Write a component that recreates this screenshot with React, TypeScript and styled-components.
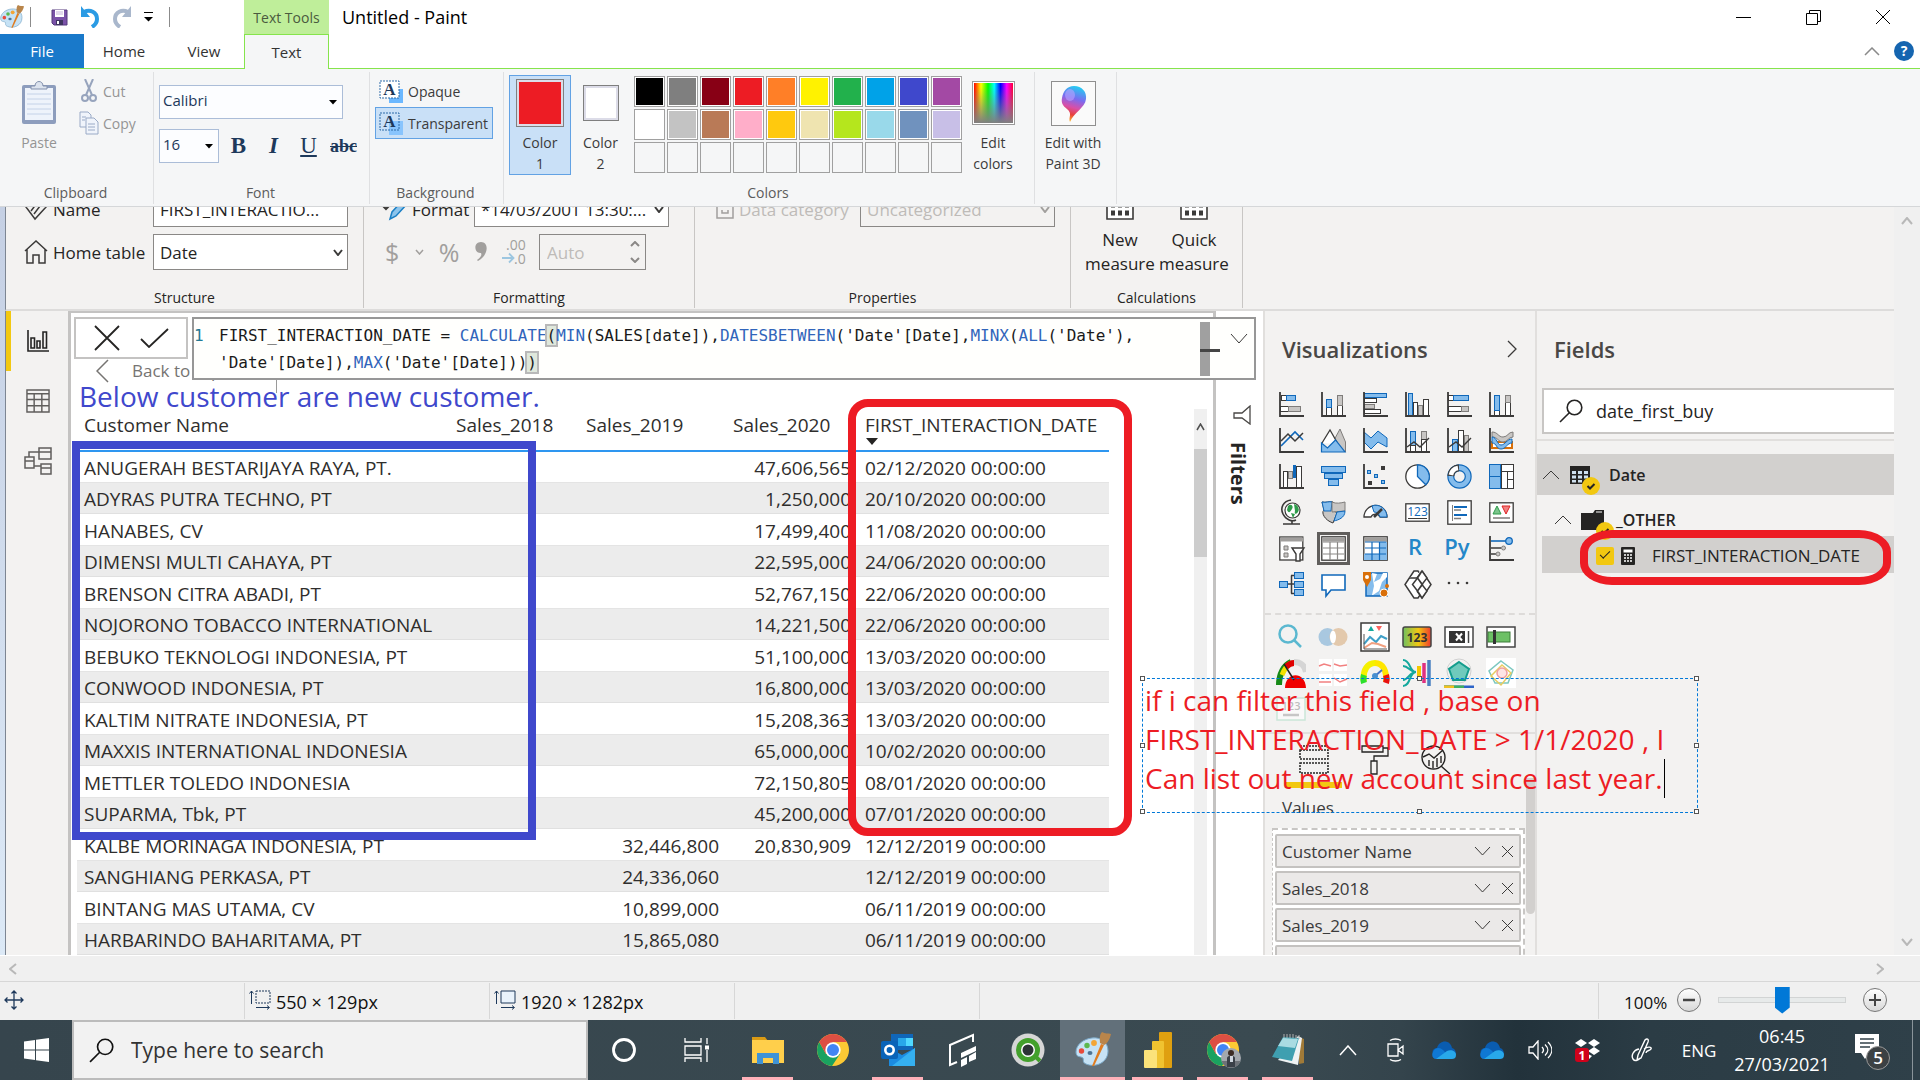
import React from "react";
import styled, { createGlobalStyle, css } from "styled-components";

const sans = `"Open Sans", "Noto Sans", sans-serif`;
const mono = `"DejaVu Sans Mono", "Liberation Mono", monospace`;

const DARK = "#3b3a39";
const BLUE = "#84bcec";
const BLUE_LINE = "#1068ba";
const GREY = "#c8c6c4";
const GREY_LINE = "#7f7d7b";
const RED = "#ed1c24";
const INDIGO = "#3f48cc";

const Global = createGlobalStyle`
  *, *::before, *::after { box-sizing: border-box; }
  html, body { margin: 0; padding: 0; }
  body { font-family: ${sans}; color: #3b3b3b; background: #fff; overflow: hidden; }
  button, input, select, textarea { font: inherit; color: inherit; margin: 0; padding: 0; border: 0; background: none; border-radius: 0; outline: none; }
  select, input[type="checkbox"], input[type="range"] { appearance: none; }
  svg { display: block; flex: none; }
`;

const Screen = styled.div`
  display: flex;
  flex-direction: column;
  height: 100vh;
`;

/* ---------- Paint window: title bar and tabs ---------- */

const TitleBar = styled.header`
  display: flex;
  height: 34px;
  flex: none;
  background: #fff;
`;
const QuickAccess = styled.div`
  display: flex;
  align-items: center;
  width: 244px;
  gap: 12px;
`;
const PlainButton = styled.button`
  display: flex;
  align-items: center;
  justify-content: center;
  flex: none;
`;
const QuickLine = styled.span<{ $first?: boolean }>`
  width: 1px;
  height: 20px;
  background: #8b8b8b;
  margin: ${(p) => (p.$first ? "0 8px 0 -6px" : "0 0 0 4px")};
`;
const ContextTab = styled.div`
  width: 85px;
  display: flex;
  align-items: center;
  justify-content: center;
  background: #bfee9a;
  color: #4a5a3e;
  font-size: 14px;
`;
const WindowTitle = styled.h1`
  margin: 0 auto 0 13px;
  font-size: 18px;
  font-weight: 400;
  line-height: 34px;
  color: #000;
`;
const WindowButtons = styled.div`
  display: flex;
  align-items: center;
  padding-right: 2px;
`;
const WindowButton = styled(PlainButton)`
  width: 70px;
  height: 34px;
`;
const Tabs = styled.nav`
  display: flex;
  height: 35px;
  flex: none;
  border-bottom: 1px solid #86e44c;
  font-size: 15px;
`;
const Tab = styled.button<{ $kind?: "file" | "active" }>`
  width: 80px;
  color: #333;
  ${(p) =>
    p.$kind === "file" &&
    css`
      width: 84px;
      background: #1979ca;
      color: #fff;
    `}
  ${(p) =>
    p.$kind === "active" &&
    css`
      width: 85px;
      height: 35px;
      background: #f5f6f7;
      border: 1px solid #86e44c;
      border-bottom: 0;
    `}
`;
const TabsEnd = styled.div`
  display: flex;
  align-items: center;
  gap: 14px;
  margin-left: auto;
  padding-right: 6px;
`;

/* ---------- Paint ribbon ---------- */

const Ribbon = styled.section`
  display: flex;
  height: 138px;
  flex: none;
  padding: 3px 0 2px;
  background: #f5f6f7;
  border-bottom: 1px solid #d5d7d9;
  font-size: 15px;
`;
const Group = styled.div<{ $w: number }>`
  display: flex;
  flex-direction: column;
  width: ${(p) => p.$w}px;
  border-right: 1px solid #dfe0e2;
`;
const GroupBody = styled.div`
  display: flex;
  flex: 1;
`;
const GroupLabel = styled.div`
  height: 22px;
  line-height: 22px;
  padding-right: 2px;
  text-align: center;
  font-size: 14px;
  color: #5c5c5c;
`;
const TallButton = styled.button<{ $w: number; $on?: boolean }>`
  display: flex;
  flex-direction: column;
  align-items: center;
  width: ${(p) => p.$w}px;
  height: 100px;
  margin-top: 3px;
  border: 1px solid ${(p) => (p.$on ? "#62a2e4" : "transparent")};
  background: ${(p) => (p.$on ? "#c9e0f7" : "none")};
  line-height: 21px;
  font-size: 14px;
`;
const PicSlot = styled.span`
  display: flex;
  align-items: center;
  justify-content: center;
  height: 56px;
  padding-bottom: 2px;
`;
const Muted = styled.span`
  color: #949494;
`;
const ClipSide = styled.div`
  display: flex;
  flex-direction: column;
  padding-top: 3px;
`;
const SmallButton = styled.button<{ $on?: boolean; $muted?: boolean }>`
  display: flex;
  align-items: center;
  gap: 4px;
  height: 32px;
  padding: ${(p) => (p.$muted ? "0" : "0 4px 0 3px")};
  border: 1px solid ${(p) => (p.$on ? "#62a2e4" : "transparent")};
  background: ${(p) => (p.$on ? "#c9e0f7" : "none")};
  color: ${(p) => (p.$muted ? "#949494" : "#3b3b3b")};
  font-size: 14px;
`;
const FontArea = styled.div`
  display: flex;
  flex-direction: column;
  gap: 10px;
  padding: 13px 0 0 5px;
`;
const FontRow = styled.div`
  display: flex;
  align-items: center;
`;
const Combo = styled.label<{ $w: number }>`
  display: flex;
  align-items: center;
  position: relative;
  width: ${(p) => p.$w}px;
  height: 34px;
  border: 1px solid #abbdd8;
  background: #fcfdff;
  color: #1e395b;
  select { width: 100%; height: 100%; padding: 0 3px 4px; }
  svg { position: absolute; right: 5px; pointer-events: none; }
`;
const StyleButton = styled.button<{ $kind: "b" | "i" | "u" | "s" }>`
  width: 35px;
  height: 30px;
  font-family: "Liberation Serif", serif;
  color: #1e395b;
  font-size: ${(p) => (p.$kind === "s" ? 18 : 23)}px;
  font-weight: ${(p) => (p.$kind === "u" ? 400 : 700)};
  font-style: ${(p) => (p.$kind === "i" ? "italic" : "normal")};
  text-decoration: ${(p) => (p.$kind === "u" ? "underline" : p.$kind === "s" ? "line-through" : "none")};
`;
const StyleRow = styled.div`
  display: flex;
  margin-left: 2px;
`;
const BackArea = styled.div`
  display: flex;
  flex-direction: column;
  padding: 3px 0 0 5px;
`;
const ColorsArea = styled.div`
  display: flex;
  padding-left: 5px;
`;
const BigSwatch = styled.span<{ $c: string; $size: number }>`
  width: ${(p) => p.$size}px;
  height: ${(p) => p.$size}px;
  border: 1px solid #7f7f7f;
  padding: 2px;
  background: linear-gradient(${(p) => p.$c}, ${(p) => p.$c}) content-box, #dcdce8;
`;
const Palette = styled.div`
  display: grid;
  grid-template-columns: repeat(10, 31px);
  grid-auto-rows: 31px;
  gap: 2px;
  padding: 4px 0 0 4px;
`;
const Cell = styled.button<{ $c?: string }>`
  border: 1px solid #a0a0a0;
  background: ${(p) => p.$c ?? "#f5f6f7"};
  box-shadow: ${(p) => (p.$c ? "inset 0 0 0 1px #fff" : "none")};
`;

/* ---------- Canvas with the pasted report ---------- */

const CanvasRow = styled.div`
  display: flex;
  flex: 1;
  min-height: 0;
`;
const Canvas = styled.main`
  position: relative;
  flex: 1;
  min-width: 0;
  overflow: hidden;
  display: flex;
  flex-direction: column;
  padding-left: 5px;
  background: linear-gradient(#c5d0e4, #dce9f6);
`;
const VScroll = styled.div`
  display: flex;
  flex-direction: column;
  justify-content: space-between;
  align-items: center;
  width: 26px;
  padding: 10px 0 9px;
  background: #f0f0f0;
`;
const PbiRibbon = styled.section`
  display: flex;
  height: 104px;
  flex: none;
  overflow: hidden;
  background: #f3f2f1;
  border-left: 1px solid #7d8693;
  border-bottom: 2px solid #dddcdb;
  color: #252423;
  font-size: 17px;
`;
const PbiGroup = styled.div<{ $w: number }>`
  display: flex;
  flex-direction: column;
  justify-content: flex-end;
  width: ${(p) => p.$w}px;
  margin-bottom: 1px;
  border-right: 1px solid #c8c6c4;
`;
const PbiLabel = styled.div`
  height: 20px;
  line-height: 20px;
  margin-top: 18px;
  text-align: center;
  font-size: 14px;
`;
const PbiRow = styled.div<{ $pad: number; $dim?: boolean }>`
  display: flex;
  align-items: center;
  flex: none;
  height: 36px;
  margin-top: 7px;
  padding-left: ${(p) => p.$pad}px;
  color: ${(p) => (p.$dim ? "#bebbb8" : "inherit")};
`;
const PbiCaption = styled.label<{ $w: number }>`
  width: ${(p) => p.$w}px;
  flex: none;
  padding-left: 5px;
  white-space: nowrap;
`;
const PbiSelect = styled.div<{ $dim?: boolean }>`
  position: relative;
  display: flex;
  align-items: center;
  width: 195px;
  height: 36px;
  border: 1px solid #8a8886;
  background: ${(p) => (p.$dim ? "#f3f2f1" : "#fff")};
  select, input { width: 100%; height: 100%; padding: 0 6px; }
  svg { position: absolute; right: 4px; pointer-events: none; }
`;
const Tools = styled.div`
  display: flex;
  align-items: center;
  justify-content: space-between;
  width: 142px;
  margin-right: 12px;
  color: #a19f9d;
  font-size: 25px;
  line-height: 30px;
`;
const Spinner = styled.div`
  display: flex;
  align-items: center;
  justify-content: space-between;
  width: 107px;
  height: 36px;
  padding: 0 5px 0 7px;
  border: 1px solid #8a8886;
  color: #bebbb8;
  input { width: 70px; }
`;
const SpinButtons = styled.span`
  display: flex;
  flex-direction: column;
  gap: 10px;
`;
const MeasureRow = styled.div`
  display: flex;
  padding-left: 12px;
  margin-bottom: -6px;
`;
const MeasureButton = styled.button`
  display: flex;
  flex-direction: column;
  align-items: center;
  width: 74px;
  line-height: 24px;
  svg { margin-bottom: 8px; }
`;

const PbiBody = styled.section`
  position: relative;
  display: flex;
  flex: 1;
  min-height: 0;
  border-left: 1px solid #7d8693;
  background: #f3f2f1;
`;
const SideNav = styled.nav`
  display: flex;
  flex-direction: column;
  width: 62px;
  flex: none;
`;
const NavButton = styled(PlainButton)<{ $on?: boolean }>`
  height: 60px;
  padding-right: 4px;
  border-left: 5px solid ${(p) => (p.$on ? "#f2c811" : "transparent")};
`;
const Report = styled.div`
  position: relative;
  flex: 1;
  min-width: 0;
  overflow: hidden;
  background: #fff;
  border: solid #c4c3c2;
  border-width: 2px 3px 0 3px;
`;
const BackButton = styled.button`
  display: flex;
  align-items: center;
  gap: 23px;
  width: 206px;
  height: 45px;
  margin-top: 35px;
  padding-left: 25px;
  border-right: 1px solid #9a9a9a;
  color: #767472;
  font-size: 17px;
`;
const TableArea = styled.div`
  display: flex;
  align-items: flex-start;
  justify-content: space-between;
  margin-top: 16px;
  padding: 0 6px;
`;
const Table = styled.table`
  table-layout: fixed;
  width: 1032px;
  border-collapse: collapse;
  font-size: 19px;
  color: #2f2e2d;
  white-space: nowrap;
`;
const Th = styled.th`
  position: relative;
  height: 42px;
  padding: 2px 7px 0;
  border-bottom: 2px solid #2e96f0;
  font-weight: 400;
  text-align: left;
  vertical-align: top;
  line-height: 28px;
`;
const SortMark = styled.svg`
  position: absolute;
  left: 8px;
  bottom: 5px;
`;
const Tr = styled.tr`
  height: 31px;
  &:nth-child(even) { height: 32px; background: #ececec; box-shadow: inset 0 -1px #e0e0e0, inset 0 1px #e4e4e4; }
`;
const Td = styled.td<{ $num?: boolean }>`
  padding: 2px 7px 0;
  line-height: 24px;
  text-align: ${(p) => (p.$num ? "right" : "left")};
`;
const TableScroll = styled.div`
  display: flex;
  flex-direction: column;
  align-items: center;
  width: 13px;
  height: 560px;
  padding-top: 14px;
  background: #f0f0f0;
`;
const TableThumb = styled.div`
  width: 13px;
  height: 108px;
  margin-top: 18px;
  background: #cdcdcd;
`;
const FilterPane = styled.aside`
  display: flex;
  flex-direction: column;
  align-items: center;
  width: 49px;
  flex: none;
  padding: 94px 0 0 4px;
  background: #fff;
  border-right: 2px solid #e1dfdd;
`;
const FilterTitle = styled.h2`
  margin: 17px 8px 0 0;
  writing-mode: vertical-rl;
  font-size: 20px;
  line-height: 26px;
  font-weight: 700;
  color: #252423;
`;

const VizPane = styled.aside`
  display: flex;
  flex-direction: column;
  width: 272px;
  flex: none;
  border-right: 2px solid #e1dfdd;
`;
const PaneHead = styled.div`
  display: flex;
  align-items: center;
  justify-content: space-between;
  height: 75px;
  flex: none;
  padding: 0 18px 0 17px;
`;
const PaneTitle = styled.h2`
  margin: 0;
  font-size: 22px;
  font-weight: 600;
  color: #494745;
`;
const IconGrid = styled.div`
  display: grid;
  grid-template-columns: repeat(6, 42px);
  grid-auto-rows: 36px;
  padding-left: 5px;
`;
const IconCell = styled(PlainButton)<{ $on?: boolean }>`
  justify-self: center;
  align-self: center;
  width: ${(p) => (p.$on ? 33 : 42)}px;
  height: ${(p) => (p.$on ? 33 : 36)}px;
  border: ${(p) => (p.$on ? "3px solid #605e5c" : "0")};
`;
const WordIcon = styled.span`
  font-size: 22px;
  font-weight: 600;
  line-height: 25px;
  margin: 0 4px 4px 0;
  color: #2487c9;
`;
const DashRule = styled.hr`
  width: 100%;
  margin: 11px 0 4px;
  border: 0;
  border-top: 2px dashed #dddbd9;
`;
const PaneTabs = styled.div`
  display: flex;
  gap: 4px;
  margin-top: 5px;
  padding: 10px 0 0 20px;
  border-top: 2px solid #e1dfdd;
`;
const PaneTab = styled(PlainButton)<{ $on?: boolean }>`
  width: 57px;
  height: 44px;
  align-items: flex-start;
  padding-top: 1px;
  border-bottom: 6px solid ${(p) => (p.$on ? "#f2c811" : "transparent")};
`;
const Wells = styled.div`
  position: relative;
  display: flex;
  flex-direction: column;
  align-items: flex-start;
  flex: 1;
  min-height: 0;
  padding-left: 7px;
`;
const WellTitle = styled.h3`
  flex: none;
  height: 25px;
  margin: 0 0 15px;
  padding: 6px 0 0 10px;
  overflow: hidden;
  font-size: 17px;
  font-weight: 400;
  line-height: 27px;
`;
const WellList = styled.ul`
  display: flex;
  flex-direction: column;
  flex: none;
  gap: 3px;
  width: 253px;
  margin: 0;
  padding: 4px 2px;
  list-style: none;
  border: 2px dashed #c8c6c4;
  border-left-width: 1px;
  background: #fff;
`;
const WellItem = styled.li`
  display: flex;
  align-items: center;
  gap: 10px;
  height: 34px;
  flex: none;
  padding: 0 5px;
  border: 2px solid #c4c2c0;
  border-radius: 2px;
  background: #ebe9e8;
  font-size: 17px;
  span { flex: 1; }
`;
const WellThumb = styled.div`
  position: absolute;
  right: 0;
  top: -10px;
  width: 9px;
  height: 136px;
  border-radius: 0 0 5px 5px;
  background: #d2d0ce;
`;

const FieldsPane = styled.aside`
  display: flex;
  flex-direction: column;
  width: 357px;
  flex: none;
  color: #252423;
`;
const SearchField = styled.label`
  display: flex;
  align-items: center;
  gap: 13px;
  height: 46px;
  margin: 2px 0 5px 5px;
  padding-left: 15px;
  border: 2px solid #c8c6c4;
  border-right: 0;
  background: #fff;
  font-size: 18px;
  input { flex: 1; min-width: 0; }
`;
const FieldRow = styled.div<{ $kind: "table" | "folder" | "measure" }>`
  display: flex;
  align-items: center;
  color: #252423;
  ${(p) =>
    p.$kind === "table" &&
    css`
      height: 41px;
      margin-top: 13px;
      padding-left: 5px;
      background: #d2d0ce;
      font-weight: 600;
      font-size: 16px;
    `}
  ${(p) =>
    p.$kind === "folder" &&
    css`
      height: 41px;
      padding: 8px 0 0 17px;
      font-size: 16px;
      font-weight: 600;
    `}
  ${(p) =>
    p.$kind === "measure" &&
    css`
      height: 37px;
      margin-left: 5px;
      padding: 2px 0 0 54px;
      gap: 7px;
      background: #d2d0ce;
      font-size: 17px;
    `}
`;
const FieldRule = styled.hr`
  width: 100%;
  margin: 0;
  border: 0;
  border-top: 2px solid #e1dfdd;
`;
const FieldName = styled.span<{ $gap: number }>`
  margin-left: ${(p) => p.$gap}px;
`;
const Tick = styled.input`
  display: grid;
  place-items: center;
  width: 18px;
  height: 18px;
  border-radius: 2px;
  background: #f2c811;
  &::after { content: ""; width: 10px; height: 5px; border: solid #252423; border-width: 0 0 1px 1px; rotate: -45deg; translate: 0 -2px; }
`;

/* ---------- Things lying over the report ---------- */

const FormulaButtons = styled.div`
  position: absolute;
  left: 68px;
  top: 6px;
  display: flex;
  align-items: center;
  justify-content: center;
  gap: 20px;
  width: 114px;
  height: 42px;
  border: 2px solid #c4c3c2;
  background: #fff;
`;
const FormulaBox = styled.div`
  position: absolute;
  left: 186px;
  right: 638px;
  top: 6px;
  display: flex;
  height: 63px;
  border: 2px solid #979797;
  background: #fffffd;
`;
const Formula = styled.code`
  flex: 1;
  display: grid;
  grid-template-columns: 25px 1fr;
  align-content: start;
  padding-top: 3px;
  font-family: ${mono};
  font-size: 16px;
  line-height: 27px;
  color: #1a1a1a;
  white-space: pre;
`;
const LineNo = styled.span`
  color: #237893;
`;
const Fn = styled.span`
  color: #3165bb;
`;
const Paren = styled.span`
  background: #dfe8dc;
  box-shadow: 0 0 0 2px #b9b9b9;
`;
const FormulaScroll = styled.span`
  position: relative;
  width: 10px;
  margin: 3px 18px 2px 0;
  background: #a0a0a0;
  &::after { content: ""; position: absolute; left: 0; top: 27px; width: 20px; height: 3px; background: #454545; }
`;
const FormulaToggle = styled(PlainButton)`
  align-items: flex-start;
  width: 22px;
  margin-right: 4px;
  padding-top: 14px;
`;
const Mark = styled.div<{ $x: number; $y: number; $w: number; $h: number; $c: string; $r: string }>`
  position: absolute;
  left: ${(p) => p.$x}px;
  top: ${(p) => p.$y}px;
  width: ${(p) => p.$w}px;
  height: ${(p) => p.$h}px;
  border: 8px solid ${(p) => p.$c};
  border-radius: ${(p) => p.$r};
  pointer-events: none;
`;
const Note = styled.p`
  position: absolute;
  left: 79px;
  top: 170px;
  margin: 0;
  font-size: 28px;
  line-height: 39px;
  color: ${INDIGO};
  white-space: nowrap;
`;
const TextBox = styled.div`
  position: absolute;
  left: 1142px;
  top: 471px;
  width: 556px;
  height: 135px;
  border: 1px dashed #0078d7;
  textarea {
    display: block;
    width: 100%;
    height: 100%;
    padding: 2px 0 0 2px;
    resize: none;
    overflow: hidden;
    font-size: 28px;
    line-height: 39px;
    color: ${RED};
    white-space: pre;
  }
`;
const Handle = styled.i<{ $x: string; $y: string }>`
  position: absolute;
  left: ${(p) => p.$x};
  top: ${(p) => p.$y};
  width: 5px;
  height: 5px;
  margin: -3px;
  border: 1px solid #555;
  background: #fff;
`;
const Caret = styled.i`
  position: absolute;
  left: 521px;
  top: 80px;
  width: 1px;
  height: 39px;
  background: #000;
`;

/* ---------- Paint scroll bar and status bar ---------- */

const HScroll = styled.div`
  display: flex;
  align-items: center;
  justify-content: space-between;
  height: 26px;
  flex: none;
  padding: 0 36px 0 9px;
  background: #f0f0f0;
  border-top: 1px solid #fff;
`;
const Status = styled.footer`
  display: flex;
  height: 39px;
  flex: none;
  background: #f0f0f0;
  border-top: 1px solid #d7d7d7;
  color: #111;
  font-size: 18px;
`;
const StatusCell = styled.div<{ $grow?: boolean }>`
  display: flex;
  align-items: center;
  gap: 5px;
  width: 245px;
  ${(p) => p.$grow && "flex: 1;"}
  padding: 2px 4px 0 4px;
  margin: 1px 0;
  border-right: 1px solid #d7d7d7;
`;
const StatusIcon = styled.svg`
  margin-bottom: 4px;
`;
const Zoom = styled.div`
  display: flex;
  align-items: center;
  gap: 10px;
  width: 321px;
  padding: 0 0 2px 25px;
  span { padding-top: 5px; font-size: 17px; }
`;
const RoundButton = styled(PlainButton)`
  width: 24px;
  height: 24px;
  border: 1px solid #777;
  border-radius: 50%;
  background: linear-gradient(#fff, #d8d8d8);
`;
const Slider = styled.input`
  width: 128px;
  height: 28px;
  margin: 0 7px;
  background: linear-gradient(#e7eaea, #e7eaea) center / 126px 4px no-repeat, linear-gradient(#d2d4d4, #d2d4d4) center / 100% 6px no-repeat;
  &::-webkit-slider-thumb {
    appearance: none;
    width: 15px;
    height: 27px;
    background: #0078d7;
    clip-path: polygon(0 0, 100% 0, 100% 78%, 50% 100%, 0 78%);
  }
`;

/* ---------- Windows task bar ---------- */

const TaskBar = styled.footer`
  display: flex;
  height: 60px;
  flex: none;
  background: linear-gradient(90deg, #36454d 0%, #3a4a51 66%, #34444c 73%, #22323b 79%, #2b3c45 86%, #2f4049 100%);
  color: #fff;
`;
const TaskButton = styled(PlainButton)<{ $w: number; $on?: boolean; $run?: boolean }>`
  position: relative;
  width: ${(p) => p.$w}px;
  background: ${(p) => (p.$on ? "#62707a" : "none")};
  &::after {
    content: "";
    position: absolute;
    left: ${(p) => (p.$on ? 0 : 7)}px;
    right: ${(p) => (p.$on ? 0 : 7)}px;
    bottom: 0;
    height: 3px;
    background: ${(p) => (p.$run ? "#ffb1b9" : "none")};
  }
`;
const TaskSearch = styled.label`
  display: flex;
  align-items: center;
  gap: 17px;
  width: 516px;
  padding-left: 15px;
  border: 2px solid #bcbcbc;
  background: #f2f2f2;
  color: #333;
  font-size: 21px;
  input { flex: 1; min-width: 0; }
  input::placeholder { color: #333; opacity: 1; }
`;
const Gap = styled.span`
  width: 3px;
`;
const Tray = styled.div`
  display: flex;
  margin-left: auto;
  font-size: 17px;
`;
const Clock = styled.div`
  display: flex;
  flex-direction: column;
  justify-content: center;
  width: 112px;
  text-align: center;
  font-size: 18px;
  line-height: 28px;
`;
const PeekLine = styled.span`
  width: 8px;
  margin-left: 8px;
  border-left: 1px solid #8a949a;
`;

/* ---------- Small drawings ---------- */

type ChevProps = { dir: "up" | "down" | "left" | "right"; w: number; h: number; c?: string; sw?: number };
const Chev = ({ dir, w, h, c = "#3b3a39", sw = 1 }: ChevProps) => {
  const d = {
    up: `M1 ${h - 1}L${w / 2} 1L${w - 1} ${h - 1}`,
    down: `M1 1L${w / 2} ${h - 1}L${w - 1} 1`,
    left: `M${w - 1} 1L1 ${h / 2}L${w - 1} ${h - 1}`,
    right: `M1 1L${w - 1} ${h / 2}L1 ${h - 1}`,
  }[dir];
  return (
    <svg width={w} height={h} fill="none" stroke={c} strokeWidth={sw}>
      <path d={d} />
    </svg>
  );
};
const Cross = ({ s, c = "#3b3a39", sw = 1 }: { s: number; c?: string; sw?: number }) => (
  <svg width={s} height={s} stroke={c} strokeWidth={sw}>
    <path d={`M1 1L${s - 1} ${s - 1}M${s - 1} 1L1 ${s - 1}`} />
  </svg>
);
const Drop = () => (
  <svg width="8" height="5"><path d="M0 0h8L4 4.500z" fill="#000" /></svg>
);
const Magnifier = ({ s, c = "#252423" }: { s: number; c?: string }) => (
  <svg width={s} height={s} viewBox="0 0 24 24" fill="none" stroke={c} strokeWidth="1.600">
    <circle cx="15.500" cy="8.500" r="7.300" />
    <path d="M10.300 13.700L1 23" />
  </svg>
);
const Bar = ({ x, y, w, h, k }: { x: number; y: number; w: number; h: number; k: "b" | "g" | "w" | "d" }) => {
  const fill = { b: BLUE, g: GREY, w: "#fff", d: DARK }[k];
  const line = { b: BLUE_LINE, g: GREY_LINE, w: DARK, d: DARK }[k];
  return <rect x={x + 0.5} y={y + 0.5} width={w - 1} height={h - 1} fill={fill} stroke={line} />;
};
const Axis = () => <path d="M1 0V24H25" fill="none" stroke={DARK} strokeWidth="1.800" />;

const PaletteIcon = ({ s }: { s: number }) => (
  <svg width={s} height={s} viewBox="0 0 36 36">
    <path d="M17 6C8 7 1 13 1 20c0 6 5 4 7 6 1 3-1 4 3 6 9 4 22-1 22-13C33 10 26 5 17 6z" fill="#c6e2f5" stroke="#7ba9c9" />
    <circle cx="6.500" cy="19" r="2.700" fill="#e84a3b" /><circle cx="12" cy="13.500" r="2.700" fill="#5cb84f" />
    <circle cx="19" cy="11" r="2.900" fill="#f3a536" /><ellipse cx="15" cy="21" rx="2.500" ry="2" fill="#4d7496" />
    <path d="M17 34L26 12l3 1-10 21z" fill="#e07c20" /><path d="M25 11c0-3-1-8 2-11 3 2 6 1 9 2-1 5-4 10-7 11z" fill="#b9854b" />
  </svg>
);
const SaveIcon = () => (
  <svg width="17" height="17" viewBox="0 0 17 17"><path d="M1 1h15v15H3l-2-2z" fill="#7a52a8" stroke="#55397c" /><path d="M4 1h9v7H4z" fill="#fff" /><path d="M5 3h7M5 5h7" stroke="#c5b3da" /><path d="M5 11h7v5H5z" fill="#3e3560" /><path d="M6 12h2v3H6z" fill="#fff" /></svg>
);
const UndoIcon = ({ c, flip }: { c: string; flip?: boolean }) => (
  <svg width="20" height="22" viewBox="0 0 20 22"><g transform={flip ? "translate(20 0) scale(-1 1)" : undefined}><path d="M4 6c6-3 13 0 13 7 0 4-2 6-5 8" fill="none" stroke={c} strokeWidth="4" /><path d="M1 0v11h9z" fill={c} /></g></svg>
);
const PasteIcon = () => (
  <svg width="36" height="44" viewBox="0 0 36 44"><rect x="1" y="4" width="34" height="39" rx="2" fill="#8d9dbd" /><rect x="4" y="7" width="28" height="32" fill="#eef3fb" /><path d="M6 13h24M6 18h24M6 23h24M6 28h24M6 33h24" stroke="#c4d2e8" /><path d="M10 8V5h4c0-6 8-6 8 0h4v3z" fill="#dce3ee" stroke="#8290ac" /></svg>
);
const CutIcon = () => (
  <svg width="20" height="24" viewBox="0 0 20 24" fill="none" stroke="#97a4bd" strokeWidth="2"><path d="M6 0l7 16M14 0L7 16" /><circle cx="6" cy="19" r="3" /><circle cx="14" cy="19" r="3" /></svg>
);
const CopyIcon = () => (
  <svg width="20" height="24" viewBox="0 0 20 24" fill="#f0f4fb" stroke="#9aaac6"><path d="M1 1h8l3 3v12H1z" /><path d="M7 7h8l4 4v12H7z" /><path d="M9 13h7M9 16h7M9 19h7M3 6h4M3 9h3" /></svg>
);
const TextBackIcon = ({ clear }: { clear?: boolean }) => (
  <svg width="25" height="23" viewBox="0 0 25 23">
    <rect x="10" y="9" width="14" height="14" fill="#6cb8ff" opacity={clear ? 0.7 : 1} />
    <rect x="1" y="1" width="19" height="17" fill={clear ? "none" : "#fff"} stroke="#2c6aa8" strokeDasharray="2 1" />
    <text x="10.500" y="15" textAnchor="middle" fontFamily="Liberation Serif, serif" fontWeight="700" fontSize="17" fill="#1e395b">A</text>
  </svg>
);
const RainbowIcon = () => (
  <svg width="43" height="44">
    <defs>
      <linearGradient id="hue"><stop offset="0" stopColor="#f00" /><stop offset=".18" stopColor="#ff0" /><stop offset=".36" stopColor="#0f0" /><stop offset=".52" stopColor="#0ff" /><stop offset=".68" stopColor="#00f" /><stop offset=".84" stopColor="#f0f" /><stop offset="1" stopColor="#f03" /></linearGradient>
      <linearGradient id="fade" x2="0" y2="1"><stop offset=".1" stopColor="#808080" stopOpacity="0" /><stop offset="1" stopColor="#808080" /></linearGradient>
    </defs>
    <rect x=".5" y=".5" width="42" height="43" fill="#fff" stroke="#9a9a9a" /><rect x="2" y="2" width="39" height="40" fill="url(#hue)" /><rect x="2" y="2" width="39" height="40" fill="url(#fade)" />
  </svg>
);
const Paint3DIcon = () => (
  <svg width="45" height="45">
    <defs><linearGradient id="drop3d" x1=".6" y1="0" x2=".4" y2="1"><stop offset="0" stopColor="#22cdf2" /><stop offset=".35" stopColor="#7a6cf0" /><stop offset=".6" stopColor="#d84fa8" /><stop offset=".8" stopColor="#e8413c" /><stop offset="1" stopColor="#fbb829" /></linearGradient></defs>
    <rect x=".5" y=".5" width="44" height="44" fill="#fafafa" stroke="#8f8f8f" />
    <path d="M23 5c8 0 13 6 12 13-1 9-12 13-16 23-2-5 3-8-3-13-4-3-6-6-5-11C12 10 16 5 23 5z" fill="url(#drop3d)" />
    <ellipse cx="19" cy="14" rx="5" ry="6" fill="#b9a4ff" opacity=".6" />
  </svg>
);

/* Visual gallery, each drawing in a 25-unit box */
const visuals: { name: string; art: React.ReactNode }[] = [
  { name: "Stacked bar chart", art: <><Bar x={2} y={3} w={6} h={6} k="w" /><Bar x={7} y={3} w={10} h={6} k="b" /><Bar x={1} y={14} w={9} h={6} k="w" /><Bar x={9} y={14} w={13} h={6} k="g" /><Axis /></> },
  { name: "Stacked column chart", art: <><Bar x={5} y={15} w={6} h={9} k="w" /><Bar x={5} y={7} w={6} h={9} k="b" /><Bar x={16} y={13} w={6} h={11} k="w" /><Bar x={16} y={3} w={6} h={11} k="g" /><Axis /></> },
  { name: "Clustered bar chart", art: <><Bar x={1} y={1} w={23} h={5} k="b" /><Bar x={1} y={6} w={13} h={5} k="w" /><Bar x={1} y={12} w={11} h={5} k="g" /><Bar x={1} y={17} w={17} h={5} k="w" /><Axis /></> },
  { name: "Clustered column chart", art: <><Bar x={3} y={1} w={5} h={23} k="b" /><Bar x={8} y={10} w={5} h={14} k="w" /><Bar x={13} y={13} w={5} h={11} k="g" /><Bar x={18} y={7} w={6} h={17} k="w" /><Axis /></> },
  { name: "100% stacked bar chart", art: <><Bar x={1} y={3} w={6} h={6} k="w" /><Bar x={6} y={3} w={16} h={6} k="b" /><Bar x={1} y={14} w={14} h={6} k="w" /><Bar x={14} y={14} w={8} h={6} k="g" /><Axis /></> },
  { name: "100% stacked column chart", art: <><Bar x={5} y={18} w={6} h={6} k="w" /><Bar x={5} y={3} w={6} h={16} k="b" /><Bar x={16} y={10} w={6} h={14} k="w" /><Bar x={16} y={3} w={6} h={8} k="g" /><Axis /></> },
  { name: "Line chart", art: <><path d="M2 18L16 4l8 8" fill="none" stroke={BLUE_LINE} strokeWidth="1.600" /><path d="M2 13L9 6l7 7 8-8" fill="none" stroke={DARK} strokeWidth="1.500" /><Axis /></> },
  { name: "Area chart", art: <><path d="M12 14L19 1l5.500 13v10" fill={GREY} stroke={GREY_LINE} /><path d="M1 15L9 2l8 14" fill="#fff" stroke={DARK} strokeWidth="1.300" /><path d="M.5 24V15l6 5 8-8L24 24z" fill={BLUE} stroke={BLUE_LINE} strokeWidth="1.200" /></> },
  { name: "Stacked area chart", art: <><path d="M1 4l7 6 7-7 9 7v9l-9-5-7 7-7-7z" fill={BLUE} stroke={BLUE_LINE} /><Axis /></> },
  { name: "Line and stacked column chart", art: <><Bar x={5} y={3} w={6} h={15} k="b" /><Bar x={5} y={17} w={6} h={7} k="w" /><Bar x={16} y={3} w={6} h={9} k="g" /><Bar x={16} y={11} w={6} h={13} k="w" /><path d="M2 19l7-5 6 5 9-9" fill="none" stroke={DARK} strokeWidth="1.400" /><Axis /></> },
  { name: "Line and clustered column chart", art: <><Bar x={5} y={11} w={6} h={13} k="b" /><Bar x={11} y={2} w={6} h={22} k="w" /><Bar x={17} y={7} w={5} h={17} k="g" /><path d="M2 19l7-5 6 5 9-9" fill="none" stroke={DARK} strokeWidth="1.400" /><Axis /></> },
  { name: "Ribbon chart", art: <><path d="M3 14h20v6H3z" fill="#fff" stroke="#d9700a" strokeWidth="2" /><path d="M3 4c6 0 6 5 11 5s5-5 10-5v5c-5 0-5 5-10 5S9 9 3 9z" fill={GREY} stroke={GREY_LINE} /><path d="M3 9c5 0 5 8 9 8s6-6 11-6v4c-5 0-6 6-11 6s-4-6-9-6z" fill={BLUE} stroke={BLUE_LINE} /><Axis /></> },
  { name: "Waterfall chart", art: <><Bar x={4} y={7} w={5} h={17} k="w" /><Bar x={9} y={7} w={5} h={8} k="g" /><rect x="14" y="1" width="3" height="13" fill={BLUE_LINE} /><Bar x={17} y={2} w={6} h={22} k="w" /><Axis /></> },
  { name: "Funnel chart", art: <><Bar x={0} y={2} w={25} h={7} k="b" /><Bar x={3} y={9} w={19} h={6} k="b" /><Bar x={7} y={15} w={11} h={7} k="b" /></> },
  { name: "Scatter chart", art: <><rect x="18" y="2" width="4" height="4" fill={DARK} /><Bar x={4} y={6} w={4} h={4} k="b" /><Bar x={11} y={10} w={4} h={4} k="b" /><Bar x={18} y={16} w={4} h={4} k="b" /><rect x="5" y="17" width="4" height="4" fill={DARK} /><Axis /></> },
  { name: "Pie chart", art: <><circle cx="12.500" cy="12.500" r="11.700" fill="#fff" stroke={DARK} strokeWidth="1.300" /><path d="M12.500 .8v11.700l8.300 8.300A11.700 11.700 0 0 0 12.500 .8z" fill={BLUE} stroke={BLUE_LINE} strokeWidth="1.300" /></> },
  { name: "Donut chart", art: <><circle cx="12.500" cy="12.500" r="8.700" fill="none" stroke={BLUE_LINE} strokeWidth="7" /><circle cx="12.500" cy="12.500" r="8.700" fill="none" stroke={BLUE} strokeWidth="4.600" /><path d="M12 3.800A8.700 8.700 0 0 0 3.800 12" fill="none" stroke={DARK} strokeWidth="7" /><path d="M11 3.900A8.700 8.700 0 0 0 3.900 11" fill="none" stroke="#fff" strokeWidth="4.600" /></> },
  { name: "Treemap", art: <><Bar x={0} y={0} w={12} h={13} k="b" /><Bar x={0} y={12} w={12} h={13} k="b" /><Bar x={12} y={0} w={13} h={8} k="w" /><Bar x={12} y={7} w={7} h={18} k="w" /><Bar x={18} y={7} w={7} h={9} k="w" /><Bar x={18} y={15} w={7} h={10} k="w" /></> },
  { name: "Map", art: <><circle cx="13.500" cy="10.500" r="7.500" fill="#fff" stroke={DARK} strokeWidth="1.200" /><path d="M9 6c3-3 6 0 4 3s-3 5-5 1zM15 4c4 1 6 5 4 8s-4 2-3-1zM12 13l4 1-2 4z" fill="#2e9b4a" /><path d="M12 0C4 1 1 8 4 14s9 8 13 6M13 20v4M4 24h17" fill="none" stroke={DARK} strokeWidth="1.600" /></> },
  { name: "Filled map", art: <><path d="M1 2c4 1 8-1 11 0v8l4 3-4 10C3 20 0 12 3 10z" fill={GREY} stroke={DARK} /><path d="M1 2c4 1 7-1 10 0l-1 9H3z" fill={BLUE} stroke={BLUE_LINE} /><path d="M11 2c4 2 9 1 13 0v9l-13 1z" fill={GREY} stroke={GREY_LINE} /><path d="M24 11c0 7-7 9-11 10l3-9z" fill={BLUE} stroke={BLUE_LINE} /></> },
  { name: "Gauge", art: <><path d="M1 17A11.500 11.500 0 0 1 24 17h-7a5 5 0 0 0-9 0z" fill="#fff" stroke={DARK} strokeWidth="1.300" /><path d="M9 6c7-3 15 3 15 11h-7c-1-3-3-5-6-5z" fill={BLUE} stroke={BLUE_LINE} /><path d="M11 17l8-8" stroke={DARK} strokeWidth="2.500" /></> },
  { name: "Card", art: <><rect x=".8" y="3.800" width="23.400" height="17.400" fill="#fff" stroke={DARK} strokeWidth="1.300" /><text x="12.500" y="16" fontSize="12" textAnchor="middle" fontFamily="Open Sans, sans-serif" fill={BLUE_LINE}>123</text><path d="M3 18.500h19" stroke={DARK} /></> },
  { name: "Multi-row card", art: <><rect x=".8" y=".8" width="23.400" height="23.400" fill="#fff" stroke={DARK} strokeWidth="1.300" /><path d="M5.500 5v16" stroke={GREY_LINE} /><path d="M7 7h13M7 15h13" stroke={BLUE_LINE} strokeWidth="2" /><path d="M7 10h7M7 18.500h7" stroke={GREY_LINE} strokeWidth="1.500" /></> },
  { name: "KPI", art: <><rect x=".8" y="2.800" width="23.400" height="19.400" fill="#fff" stroke={DARK} strokeWidth="1.300" /><path d="M8 6l4 8H4z" fill="#7cc58c" stroke="#2e9b4a" /><path d="M17 14l4-8h-8z" fill="#f08080" stroke="#d22" /><path d="M4 18h17" stroke={GREY_LINE} strokeWidth="1.500" /></> },
  { name: "Slicer", art: <><rect x=".8" y="1" width="23" height="23" fill="#fff" stroke={DARK} strokeWidth="1.300" /><path d="M1 3.500h23" stroke="#a19f9d" strokeWidth="4" /><path d="M5 10h4v4H5zM5 17h4v4H5z" fill={GREY} stroke={GREY_LINE} /><path d="M13 12h12l-4 6v7h-4v-7z" fill="#fff" stroke={DARK} strokeWidth="1.400" /></> },
  { name: "Table", art: <><rect x=".8" y=".8" width="23.400" height="23.400" fill="#fff" stroke={DARK} strokeWidth="1.300" /><path d="M1 3.500h23" stroke="#a19f9d" strokeWidth="4" /><path d="M2 6h21M2 12h21M2 18h21M9 6v18M16.500 6v18" stroke="#8a8886" strokeWidth="1.200" /></> },
  { name: "Matrix", art: <><rect x=".8" y=".8" width="23.400" height="23.400" fill="#fff" stroke={DARK} strokeWidth="1.300" /><path d="M17 6h7v18H1v-6h16z" fill={BLUE} /><path d="M1 3.500h23" stroke="#a19f9d" strokeWidth="4" /><path d="M2 6h21M2 12h21M2 18h21M9 6v18M16.500 6v18" stroke={BLUE_LINE} strokeWidth="1.200" /></> },
  { name: "R script visual", art: null },
  { name: "Python visual", art: null },
  { name: "Key influencers", art: <><path d="M2 5h16" stroke={BLUE_LINE} strokeWidth="1.600" /><circle cx="20" cy="5" r="3.300" fill={BLUE} stroke={BLUE_LINE} strokeWidth="1.300" /><path d="M2 12h10M2 18h5" stroke={DARK} strokeWidth="1.500" /><circle cx="14.500" cy="12" r="2" fill={GREY} stroke={GREY_LINE} /><circle cx="9" cy="18" r="2" fill={GREY} stroke={GREY_LINE} /><Axis /></> },
  { name: "Decomposition tree", art: <><path d="M8 12h8M12.500 3.500v18M12 3.500h5M12 21.500h5" stroke={DARK} strokeWidth="1.500" fill="none" /><Bar x={0} y={9} w={9} h={7} k="b" /><Bar x={15} y={0} w={10} h={7} k="b" /><Bar x={15} y={9} w={10} h={7} k="b" /><Bar x={15} y={17} w={10} h={7} k="b" /></> },
  { name: "Q&A", art: <path d="M1 3h23v15H10l-5 6v-6H1z" fill="#fff" stroke={BLUE_LINE} strokeWidth="1.600" /> },
  { name: "ArcGIS map", art: <><path d="M3 1h21v23H3z" fill={BLUE} stroke={BLUE_LINE} strokeWidth="1.500" /><path d="M9 1l5 1-3 8 6-3 3-6h4v4l-5 5-3 9-6 4H9l2-9z" fill="#fff" /><path d="M0 0h8v8l-4 7-4-7z" fill="#d9700a" /><circle cx="4" cy="5" r="2" fill="#fff" /><circle cx="21" cy="21" r="4" fill="#d9700a" stroke="#fff" /><circle cx="24" cy="14" r="2" fill="#d9700a" /></> },
  { name: "Power Apps", art: <g fill="#fff" stroke={DARK} strokeWidth="1.500"><path d="M9 -1L0 12.500 9 26h4l9-13.500L13 -1z" /><path d="M17 -1L12 6l-8 0M17 -1l9 13.500L17 26l-5-7" /><path d="M12.500 6l5 6.500-5 6.500-5-6.500zM17 -1l5 7-5 6.500-4.500-6.500zM17 26l5-7-5-6.500-4.500 6.500z" /></g> },
  { name: "More visuals", art: <><circle cx="2" cy="11" r="1.300" fill={DARK} /><circle cx="11" cy="11" r="1.300" fill={DARK} /><circle cx="20" cy="11" r="1.300" fill={DARK} /></> },
];
const words: Record<string, string> = { "R script visual": "R", "Python visual": "Py" };

/* Imported visuals, 30-unit box */
const imported: { name: string; art: React.ReactNode }[] = [
  { name: "Search visual", art: <g fill="none" stroke="#5bb8d0" strokeWidth="2.500"><circle cx="12" cy="12" r="8.500" /><path d="M18 18l7 7" /></g> },
  { name: "Venn", art: <><circle cx="9.500" cy="15" r="9" fill="#a9c8e0" /><circle cx="20.500" cy="15" r="9" fill="#e3c9ac" /><ellipse cx="15" cy="15" rx="3" ry="6.500" fill="#fff" /></> },
  { name: "KPI trend", art: <><rect x="1" y="1" width="28" height="28" fill="#fff" stroke={DARK} strokeWidth="1.500" /><path d="M11 4l3 5H8z" fill="#14a89d" /><path d="M19 9l3-5h-6z" fill="#fd625e" /><path d="M4 22l6-7 6 5 5-6 6 3" fill="none" stroke="#3fa0c8" strokeWidth="2" /><path d="M4 26l8-5 6 1 8 3" fill="none" stroke="#f0a080" strokeWidth="2" /><path d="M4 12v15h23" fill="none" stroke="#555" /></> },
  { name: "Number card", art: <><defs><linearGradient id="rag"><stop offset="0" stopColor="#6fc060" /><stop offset=".55" stopColor="#f2c811" /><stop offset="1" stopColor="#f03a2e" /></linearGradient></defs><rect x="1" y="5" width="28" height="20" rx="2" fill="url(#rag)" stroke="#444" strokeWidth="1.500" /><text x="15" y="19.500" fontSize="12" fontWeight="700" textAnchor="middle" fontFamily="Open Sans, sans-serif" fill="#333">123</text></> },
  { name: "Excluder", art: <><rect x="1" y="5" width="28" height="20" fill="#fff" stroke="#444" strokeWidth="1.500" /><rect x="5" y="9" width="16" height="12" fill="#333" /><path d="M12 11.500l6 7M18 11.500l-6 7" stroke="#fff" strokeWidth="2" /><path d="M24.500 9v12" stroke="#444" strokeWidth="1.500" /></> },
  { name: "Bullet", art: <><rect x="1" y="5" width="28" height="20" fill="#fff" stroke="#444" strokeWidth="1.500" /><rect x="2" y="10" width="22" height="10" fill="#6cc065" stroke="#3c7c3a" /><path d="M8.500 8v14" stroke="#333" strokeWidth="3" /></> },
  { name: "Dial gauge", art: <><path d="M3 27C3 16 8 7 15 4" fill="none" stroke="#178a17" strokeWidth="6" /><path d="M6 17c2-5 4-9 9-12" fill="none" stroke="#f5e000" strokeWidth="5" /><path d="M10 9c3-3 5-4 8-4" fill="none" stroke="#e00000" strokeWidth="6" /><path d="M18 4c7 0 11 4 12 10" fill="none" stroke="#d5d5d5" strokeWidth="6" /><path d="M9 30c0-16 20-18 21 0z" fill="#f00000" /><path d="M8 6l10 16" stroke="#222" strokeWidth="1.500" /></> },
  { name: "Small multiples", art: <><path d="M1 1h13v12H1zM16 1h13v12H16zM1 16h13v12H1zM16 16h13v12H16z" fill="#fff" /><path d="M1 8l5-2 7 2M16 6l6 2 7-1M1 24h12M16 20l6 4 7-3" fill="none" stroke="#f28080" strokeWidth="1.500" /></> },
  { name: "Tachometer", art: <><path d="M4 24C2 12 8 5 15 5" fill="none" stroke="#f5f000" strokeWidth="6" /><path d="M15 5c8 0 12 8 11 19" fill="none" stroke="#ffe600" strokeWidth="6" /><path d="M4 25c-1-3-1-5 0-8" fill="none" stroke="#2ce02c" strokeWidth="6" /><path d="M26 25c1-3 1-5 0-8" fill="none" stroke="#e81010" strokeWidth="6" /><path d="M15 18l7-6" stroke="#4472c4" strokeWidth="2" /><circle cx="15" cy="18" r="3" fill="#4a90d0" /></> },
  { name: "Flow", art: <><path d="M1 2c8 0 6 12 13 12M1 8c6 0 6 6 13 6M1 28c8 0 6-14 13-14M1 22c6 0 6-8 13-8" fill="none" stroke="#14a89d" strokeWidth="2" /><path d="M17 8v13" stroke="#f5c800" strokeWidth="4" /><path d="M22 5v20" stroke="#e03080" strokeWidth="3.500" /><path d="M27 2v26" stroke="#4a80c0" strokeWidth="3.500" /></> },
  { name: "Radar", art: <><circle cx="15" cy="13" r="12" fill="none" stroke="#d0d0d0" /><path d="M15 4l10 7-4 11H9L5 11z" fill="#6fcabc" stroke="#149d8d" strokeWidth="2" /><path d="M0 29h30" stroke="#2c64c8" strokeWidth="3" /><path d="M0 29h20" stroke="#40b060" strokeWidth="3" /><path d="M0 29h10" stroke="#f0c020" strokeWidth="3" /></> },
  { name: "Radar outline", art: <><path d="M0 0h30v30H0z" fill="#fff" /><path d="M15 3l12 9-5 13H9L3 13z" fill="none" stroke="#7cc8c0" strokeWidth="1.500" /><path d="M16 7l9 8-10 12-10-9z" fill="none" stroke="#e8cc60" strokeWidth="1.500" /><circle cx="16" cy="15" r="5" fill="#fde4e4" stroke="#f0a0a0" strokeWidth="1.500" /></> },
  { name: "Pale card", art: <g opacity=".6"><rect x="1" y="4" width="28" height="22" fill="#fff" stroke="#b0e0c8" strokeWidth="1.500" /><text x="15" y="16" fontSize="11" fontWeight="600" textAnchor="middle" fontFamily="Open Sans, sans-serif" fill="#999">123</text><path d="M7 21h16" stroke="#aaa" strokeWidth="2.500" /></g> },
];

const ChromeIcon = ({ person }: { person?: boolean }) => (
  <svg width="36" height="36" viewBox="0 0 36 36">
    <circle cx="18" cy="18" r="16" fill="#fcc934" />
    <path d="M4.200 10A16 16 0 0 0 17 34l8-12H11z" fill="#1aa260" />
    <path d="M4.200 10A16 16 0 0 1 31.800 10H18l-7 12z" fill="#dd4f43" />
    <circle cx="18" cy="18" r="7.700" fill="#fff" /><circle cx="18" cy="18" r="6" fill="#4285f4" />
    {person && <g><circle cx="26" cy="26" r="10" fill="#a3a8ad" /><path d="M16.500 29a10 10 0 0 0 19 0z" fill="#6d7278" /><circle cx="26" cy="21" r="3" fill="#3c2c24" /><path d="M22 35V26c0-3 8-3 8 0v9z" fill="#3a4048" /><path d="M25 24h3v6h-3z" fill="#cfd6de" /></g>}
  </svg>
);
const FolderIcon = () => (
  <svg width="34" height="34" viewBox="0 0 34 34"><path d="M1 4h13l3 4h-16z" fill="#d99a14" /><path d="M1 7h32v23H1z" fill="#ffcf4b" /><path d="M6 31V20h22v11h-6v-6H12v6z" fill="#3f93d6" /></svg>
);
const OutlookIcon = () => (
  <svg width="36" height="36" viewBox="0 0 36 36"><path d="M11 2h22v16H11z" fill="#1066b8" /><path d="M18 6h8v8h-8z" fill="#28a8ea" /><path d="M26 6h7v8h-7z" fill="#50d9ff" /><path d="M9 16l13 7 13-7v18H9z" fill="#1b8be0" /><path d="M35 16v18H12z" fill="#35b0f0" /><rect x="1" y="9" width="17" height="18" rx="2" fill="#0a64b8" /><circle cx="9.500" cy="18" r="4.200" fill="none" stroke="#fff" strokeWidth="2.600" /></svg>
);
const NewsIcon = () => (
  <svg width="28" height="34" viewBox="0 0 28 34"><path d="M8 29l-7 3V12L24 2v7" fill="none" stroke="#fff" strokeWidth="2" /><path d="M12 20l15-7v5l-15 7zM12 27l6-3v7l-6 3zM20 23l7-4v7l-7 3z" fill="#fff" /></svg>
);
const QlikIcon = () => (
  <svg width="34" height="34" viewBox="0 0 34 34"><circle cx="17" cy="17" r="16.500" fill="#d6d6d6" /><circle cx="17" cy="17" r="9.500" fill="#fff" stroke="#43a02c" strokeWidth="5" /><circle cx="17" cy="17" r="5.500" fill="#2d3436" /><path d="M23 22l6 6" stroke="#43a02c" strokeWidth="4" /></svg>
);
const PowerBiIcon = () => (
  <svg width="28" height="36" viewBox="0 0 28 36"><rect x="15" y="0" width="13" height="36" rx="1" fill="#dfa010" /><rect x="8" y="9" width="12" height="27" rx="1" fill="#f0c330" /><rect x="0" y="18" width="13" height="18" rx="1" fill="#fbe27a" /></svg>
);
const NotepadIcon = () => (
  <svg width="34" height="34" viewBox="0 0 34 34"><path d="M28 4l5 2v24l-5 1z" fill="#a07a38" /><path d="M27 3l4 2-4 27-20-5z" fill="#eef2f3" /><path d="M12 4l16 1-7 23L1 24z" fill="#3f9fb0" /><path d="M12 5l15 1-3 9L7 13z" fill="#a9dbe2" /><path d="M13 1v4M16 1v4M19 1v4M22 1v4M25 2v4M28 2v4" stroke="#b0b0b0" /></svg>
);
const CloudIcon = () => (
  <svg width="24" height="19" viewBox="0 0 24 19"><path d="M5 7c2-8 13-9 15 0 4 1 4 5 4 7H2C-1 11 1 7 5 7z" fill="#0a5cb0" /><path d="M1 11c2-5 7-5 10-2l6 6-8 3H4c-3 0-5-4-3-7z" fill="#0f78d4" /><path d="M4 18l11-8c4-2 9 0 9 4 0 3-2 4-4 4z" fill="#28a8ea" /></svg>
);
const TableGlyph = ({ s }: { s: number }) => (
  <svg width={s} height={s} viewBox="0 0 25 25" fill="none" stroke="#605e5c" strokeWidth="1.500"><path d="M1 1h23v23H1zM1 5h23M1 11h23M1 17.500h23M8.500 5v19M16.500 5v19" /></svg>
);
const CheckBadge = styled.svg`
  position: relative;
  left: -8px;
  top: 11px;
  margin-right: -16px;
`;
const Badge = () => (
  <CheckBadge width="18" height="18"><circle cx="9" cy="9" r="9" fill="#f2c811" /><path d="M5.500 9l2.500 2.500 4.500-4.500" fill="none" stroke="#252423" strokeWidth="2" /></CheckBadge>
);
const CalcGlyph = ({ w, h }: { w: number; h: number }) => (
  <svg width={w} height={h} viewBox="0 0 14 18"><rect width="14" height="18" rx="1" fill="#252423" /><path d="M2.500 2.500h9v3h-9z" fill="#fff" /><path d="M3 8h2M6 8h2M9 8h2M3 11h2M6 11h2M9 11h2M3 14h2M6 14h2M9 14h2" stroke="#fff" strokeWidth="1.600" /></svg>
);
const KeypadIcon = () => (
  <svg width="28" height="28" viewBox="0 0 28 28"><path d="M1 1h26v26H1z" fill="#fff" stroke="#3b3a39" strokeWidth="1.600" /><path d="M5 13h4M12 13h4M19 13h4M5 21h4M12 21h4M19 21h4" stroke="#3b3a39" strokeWidth="5" /></svg>
);

/* ---------- Data ---------- */

const palette: (string | undefined)[] = [
  "#000000", "#7f7f7f", "#880015", "#ed1c24", "#ff7f27", "#fff200", "#22b14c", "#00a2e8", "#3f48cc", "#a349a4",
  "#ffffff", "#c3c3c3", "#b97a57", "#ffaec9", "#ffc90e", "#efe4b0", "#b5e61d", "#99d9ea", "#7092be", "#c8bfe7",
  ...Array(10).fill(undefined),
];

const rows: [string, string, string, string][] = [
  ["ANUGERAH BESTARIJAYA RAYA, PT.", "", "47,606,565", "02/12/2020"],
  ["ADYRAS PUTRA TECHNO, PT", "", "1,250,000", "20/10/2020"],
  ["HANABES, CV", "", "17,499,400", "11/08/2020"],
  ["DIMENSI MULTI CAHAYA, PT", "", "22,595,000", "24/06/2020"],
  ["BRENSON CITRA ABADI, PT", "", "52,767,150", "22/06/2020"],
  ["NOJORONO TOBACCO INTERNATIONAL", "", "14,221,500", "22/06/2020"],
  ["BEBUKO TEKNOLOGI INDONESIA, PT", "", "51,100,000", "13/03/2020"],
  ["CONWOOD INDONESIA, PT", "", "16,800,000", "13/03/2020"],
  ["KALTIM NITRATE INDONESIA, PT", "", "15,208,363", "13/03/2020"],
  ["MAXXIS INTERNATIONAL INDONESIA", "", "65,000,000", "10/02/2020"],
  ["METTLER TOLEDO INDONESIA", "", "72,150,805", "08/01/2020"],
  ["SUPARMA, Tbk, PT", "", "45,200,000", "07/01/2020"],
  ["KALBE MORINAGA INDONESIA, PT", "32,446,800", "20,830,909", "12/12/2019"],
  ["SANGHIANG PERKASA, PT", "24,336,060", "", "12/12/2019"],
  ["BINTANG MAS UTAMA, CV", "10,899,000", "", "06/11/2019"],
  ["HARBARINDO BAHARITAMA, PT", "15,865,080", "", "06/11/2019"],
];
const wells = ["Customer Name", "Sales_2018", "Sales_2019", "Sales_2020"];
const handles: [string, string][] = [["0%", "0%"], ["50%", "0%"], ["100%", "0%"], ["0%", "50%"], ["100%", "50%"], ["0%", "100%"], ["50%", "100%"], ["100%", "100%"]];
const noteText = "if i can filter this field , base on\nFIRST_INTERACTION_DATE > 1/1/2020 , I\nCan list out new account since last year.";

/* ---------- Sections ---------- */

const PaintTop = () => (
  <>
    <TitleBar>
      <QuickAccess>
        <PaletteIcon s={24} />
        <QuickLine $first />
        <PlainButton aria-label="Save"><SaveIcon /></PlainButton>
        <PlainButton aria-label="Undo"><UndoIcon c="#2b9be4" /></PlainButton>
        <PlainButton aria-label="Redo"><UndoIcon c="#a9b7cc" flip /></PlainButton>
        <PlainButton aria-label="Customize quick access">
          <svg width="9" height="10"><path d="M0 .5h9" stroke="#000" /><path d="M0 5h9L4.500 9.500z" /></svg>
        </PlainButton>
        <QuickLine />
      </QuickAccess>
      <ContextTab>Text Tools</ContextTab>
      <WindowTitle>Untitled - Paint</WindowTitle>
      <WindowButtons>
        <WindowButton aria-label="Minimize"><svg width="15" height="15"><path d="M0 7.500h15" stroke="#000" /></svg></WindowButton>
        <WindowButton aria-label="Restore"><svg width="15" height="15" fill="none" stroke="#000"><path d="M.5 3.500h11v11H.5zM3.500 3V.5h11v11H12" /></svg></WindowButton>
        <WindowButton aria-label="Close"><Cross s={16} c="#000" /></WindowButton>
      </WindowButtons>
    </TitleBar>
    <Tabs>
      <Tab $kind="file">File</Tab>
      <Tab>Home</Tab>
      <Tab>View</Tab>
      <Tab $kind="active">Text</Tab>
      <TabsEnd>
        <PlainButton aria-label="Collapse ribbon"><Chev dir="up" w={16} h={9} c="#8a8a8a" sw={1.5} /></PlainButton>
        <PlainButton aria-label="Help">
          <svg width="20" height="20"><circle cx="10" cy="10" r="10" fill="#1565b0" /><text x="10" y="15" fill="#fff" fontSize="14" fontWeight="700" textAnchor="middle" fontFamily="Open Sans, sans-serif">?</text></svg>
        </PlainButton>
      </TabsEnd>
    </Tabs>
    <Ribbon>
      <Group $w={154}>
        <GroupBody>
          <TallButton $w={78}><PicSlot><PasteIcon /></PicSlot><Muted>Paste</Muted></TallButton>
          <ClipSide>
            <SmallButton $muted><CutIcon />Cut</SmallButton>
            <SmallButton $muted><CopyIcon />Copy</SmallButton>
          </ClipSide>
        </GroupBody>
        <GroupLabel>Clipboard</GroupLabel>
      </Group>
      <Group $w={216}>
        <GroupBody>
          <FontArea>
            <Combo $w={184}><select aria-label="Font family"><option>Calibri</option></select><Drop /></Combo>
            <FontRow>
              <Combo $w={60}><select aria-label="Font size"><option>16</option></select><Drop /></Combo>
              <StyleRow>
                <StyleButton $kind="b">B</StyleButton>
                <StyleButton $kind="i">I</StyleButton>
                <StyleButton $kind="u">U</StyleButton>
                <StyleButton $kind="s">abc</StyleButton>
              </StyleRow>
            </FontRow>
          </FontArea>
        </GroupBody>
        <GroupLabel>Font</GroupLabel>
      </Group>
      <Group $w={134}>
        <GroupBody>
          <BackArea>
            <SmallButton><TextBackIcon />Opaque</SmallButton>
            <SmallButton $on><TextBackIcon clear />Transparent</SmallButton>
          </BackArea>
        </GroupBody>
        <GroupLabel>Background</GroupLabel>
      </Group>
      <Group $w={531}>
        <GroupBody>
          <ColorsArea>
            <TallButton $w={62} $on><PicSlot><BigSwatch $c={RED} $size={48} /></PicSlot><span>Color</span><span>1</span></TallButton>
            <TallButton $w={59}><PicSlot><BigSwatch $c="#fff" $size={36} /></PicSlot><span>Color</span><span>2</span></TallButton>
            <Palette>{palette.map((c, i) => <Cell key={i} $c={c} aria-label={`Swatch ${i + 1}`} />)}</Palette>
            <TallButton $w={62}><PicSlot><RainbowIcon /></PicSlot><span>Edit</span><span>colors</span></TallButton>
          </ColorsArea>
        </GroupBody>
        <GroupLabel>Colors</GroupLabel>
      </Group>
      <Group $w={82}>
        <GroupBody>
          <TallButton $w={76}><PicSlot><Paint3DIcon /></PicSlot><span>Edit with</span><span>Paint 3D</span></TallButton>
        </GroupBody>
      </Group>
    </Ribbon>
  </>
);

const ModelRibbon = () => (
  <PbiRibbon>
    <PbiGroup $w={358}>
      <PbiRow $pad={18}>
        <svg width="24" height="24" viewBox="0 0 24 24" fill="none" stroke={DARK} strokeWidth="1.500"><path d="M2 10L12 1l10 9-11 12zM7 14l6-8M10 17l6-8" /></svg>
        <PbiCaption $w={105} htmlFor="measure-name">Name</PbiCaption>
        <PbiSelect><input id="measure-name" defaultValue="FIRST_INTERACTIO..." /></PbiSelect>
      </PbiRow>
      <PbiRow $pad={18}>
        <svg width="24" height="24" viewBox="0 0 24 24" fill="none" stroke={DARK} strokeWidth="1.500"><path d="M1 11L12 1l11 10M3 9v14h6v-8h6v8h6V9" /></svg>
        <PbiCaption $w={105} htmlFor="home-table">Home table</PbiCaption>
        <PbiSelect><select id="home-table"><option>Date</option></select><Chev dir="down" w={10} h={7} sw={2} /></PbiSelect>
      </PbiRow>
      <PbiLabel>Structure</PbiLabel>
    </PbiGroup>
    <PbiGroup $w={331}>
      <PbiRow $pad={17}>
        <svg width="26" height="24" viewBox="0 0 26 24"><path d="M1 8l4 4 4-4" fill="none" stroke={DARK} strokeWidth="2" /><path d="M9 22l2-7L22 3l4 4-11 12z" fill="#8cc4ec" stroke="#1b7fc4" strokeWidth="1.500" /></svg>
        <PbiCaption $w={67} htmlFor="format">Format</PbiCaption>
        <PbiSelect><select id="format"><option>*14/03/2001 13:30:...</option></select><Chev dir="down" w={10} h={7} sw={2} /></PbiSelect>
      </PbiRow>
      <PbiRow $pad={21}>
        <Tools>
          <span>$</span>
          <Chev dir="down" w={9} h={6} c="#a19f9d" sw={1.5} />
          <span>%</span>
          <svg width="12" height="20"><path d="M6 0c8 0 8 13-3 19l-1-1c4-3 5-5 4-7-7 1-8-11 0-11z" fill="#a19f9d" /></svg>
          <svg width="25" height="26"><text x="4" y="11" fontSize="14" fill="#a19f9d" fontFamily="Open Sans, sans-serif">.00</text><text x="12" y="25" fontSize="14" fill="#a19f9d" fontFamily="Open Sans, sans-serif">.0</text><path d="M0 19h11M7 14.500l4.500 4.500L7 23.500" fill="none" stroke="#9cc6e0" strokeWidth="1.800" /></svg>
        </Tools>
        <Spinner>
          <input aria-label="Decimal places" defaultValue="Auto" />
          <SpinButtons><Chev dir="up" w={10} h={6} c="#8a8886" sw={2} /><Chev dir="down" w={10} h={6} c="#8a8886" sw={2} /></SpinButtons>
        </Spinner>
      </PbiRow>
      <PbiLabel>Formatting</PbiLabel>
    </PbiGroup>
    <PbiGroup $w={376}>
      <PbiRow $pad={21} $dim>
        <svg width="18" height="20" fill="none" stroke="#a19f9d" strokeWidth="1.500"><path d="M1 1h16v18H1zM1 6h16M6 11v3h6v-3" /></svg>
        <PbiCaption $w={126} htmlFor="category">Data category</PbiCaption>
        <PbiSelect $dim><select id="category"><option>Uncategorized</option></select><Chev dir="down" w={10} h={7} c="#a19f9d" sw={2} /></PbiSelect>
      </PbiRow>
      <PbiRow $pad={0} />
      <PbiLabel>Properties</PbiLabel>
    </PbiGroup>
    <PbiGroup $w={172}>
      <MeasureRow>
        <MeasureButton><KeypadIcon /><span>New</span><span>measure</span></MeasureButton>
        <MeasureButton><KeypadIcon /><span>Quick</span><span>measure</span></MeasureButton>
      </MeasureRow>
      <PbiLabel>Calculations</PbiLabel>
    </PbiGroup>
  </PbiRibbon>
);

const ReportView = () => (
  <Report>
    <BackButton><Chev dir="left" w={13} h={24} c="#767472" sw={1.5} />Back to report</BackButton>
    <TableArea>
      <Table>
        <colgroup><col width="372" /><col width="130" /><col width="147" /><col width="132" /><col width="251" /></colgroup>
        <thead>
          <tr>
            <Th>Customer Name</Th><Th>Sales_2018</Th><Th>Sales_2019</Th><Th>Sales_2020</Th>
            <Th>FIRST_INTERACTION_DATE<SortMark width="12" height="7"><path d="M0 0h12L6 7z" fill="#252423" /></SortMark></Th>
          </tr>
        </thead>
        <tbody>
          {rows.map(([name, y19, y20, date]) => (
            <Tr key={name}><Td>{name}</Td><Td $num /><Td $num>{y19}</Td><Td $num>{y20}</Td><Td>{date} 00:00:00</Td></Tr>
          ))}
        </tbody>
      </Table>
      <TableScroll><Chev dir="up" w={9} h={8} c="#505050" sw={1.5} /><TableThumb /></TableScroll>
    </TableArea>
  </Report>
);

const Visualizations = () => (
  <VizPane>
    <PaneHead><PaneTitle>Visualizations</PaneTitle><PlainButton aria-label="Collapse pane"><Chev dir="right" w={10} h={18} sw={1.3} /></PlainButton></PaneHead>
    <IconGrid>
      {visuals.map((v) => (
        <IconCell key={v.name} aria-label={v.name} $on={v.name === "Table"}>
          {words[v.name] ? <WordIcon>{words[v.name]}</WordIcon> : <svg width="25" height="25" overflow="visible">{v.art}</svg>}
        </IconCell>
      ))}
    </IconGrid>
    <DashRule />
    <IconGrid>
      {imported.map((v) => <IconCell key={v.name} aria-label={v.name}><svg width="30" height="30">{v.art}</svg></IconCell>)}
    </IconGrid>
    <PaneTabs>
      <PaneTab $on aria-label="Fields"><svg width="30" height="30" fill="none" stroke="#252423" strokeWidth="1.500"><path d="M1 1h28M1 5h28v9H1zM1 18h28v10H1z" strokeDasharray="2 1" /></svg></PaneTab>
      <PaneTab aria-label="Format"><svg width="28" height="30" fill="none" stroke="#252423" strokeWidth="1.300"><path d="M1 1h21v6H1zM22 3h5v8H13v5M10 16h6v13h-6z" /></svg></PaneTab>
      <PaneTab aria-label="Analytics"><svg width="30" height="30" fill="none" stroke="#252423" strokeWidth="1.400"><circle cx="12.500" cy="12.500" r="11.500" /><path d="M20 21l9 8M2 12l6-3 5 4 9-8M8 15v6M12 16v7M16 13v9M20 11v7" /></svg></PaneTab>
    </PaneTabs>
    <Wells>
      <WellTitle>Values</WellTitle>
      <WellList>
        {wells.map((w) => (
          <WellItem key={w}>
            <span>{w}</span>
            <PlainButton aria-label={`${w} options`}><Chev dir="down" w={17} h={10} /></PlainButton>
            <PlainButton aria-label={`Remove ${w}`}><Cross s={13} /></PlainButton>
          </WellItem>
        ))}
      </WellList>
      <WellThumb />
    </Wells>
  </VizPane>
);

const Fields = () => (
  <FieldsPane>
    <PaneHead><PaneTitle>Fields</PaneTitle></PaneHead>
    <SearchField><Magnifier s={24} /><input aria-label="Search fields" defaultValue="date_first_buy" /></SearchField>
    <FieldRule />
    <FieldRow $kind="table">
      <Chev dir="up" w={18} h={10} />
      <FieldName $gap={10}><svg width="20" height="18" viewBox="0 0 20 18"><path d="M0 0h20v18H0z" fill="#252423" /><path d="M2 5h4v3H2zM8 5h4v3H8zM14 5h4v3h-4zM2 9.500h4v3H2zM8 9.500h4v3H8zM14 9.500h4v3h-4zM2 14h4v2.500H2zM8 14h4v2.500H8z" fill="#cfe0ee" /></svg></FieldName>
      <Badge />
      <FieldName $gap={17}>Date</FieldName>
    </FieldRow>
    <FieldRow $kind="folder">
      <Chev dir="up" w={18} h={10} />
      <FieldName $gap={9}><svg width="23" height="20"><path d="M0 3h12l2-3h9v20H0z" fill="#252423" /><path d="M15 2h6" stroke="#fff" /></svg></FieldName>
      <Badge />
      <FieldName $gap={10}>_OTHER</FieldName>
    </FieldRow>
    <FieldRow $kind="measure">
      <Tick type="checkbox" defaultChecked id="fid" />
      <CalcGlyph w={14} h={18} />
      <FieldName $gap={10}><label htmlFor="fid">FIRST_INTERACTION_DATE</label></FieldName>
    </FieldRow>
  </FieldsPane>
);

const FormulaBar = () => (
  <>
    <FormulaButtons>
      <PlainButton aria-label="Cancel"><Cross s={26} c="#252423" sw={1.8} /></PlainButton>
      <PlainButton aria-label="Commit"><svg width="29" height="20" fill="none" stroke="#252423" strokeWidth="1.800"><path d="M1 11l8 8L28 1" /></svg></PlainButton>
    </FormulaButtons>
    <FormulaBox>
      <Formula>
        <LineNo>1</LineNo>
        <span>FIRST_INTERACTION_DATE = <Fn>CALCULATE</Fn><Paren>(</Paren><Fn>MIN</Fn>(SALES[date]),<Fn>DATESBETWEEN</Fn>('Date'[Date],<Fn>MINX</Fn>(<Fn>ALL</Fn>('Date'),</span>
        <span />
        <span>'Date'[Date]),<Fn>MAX</Fn>('Date'[Date]))<Paren>)</Paren></span>
      </Formula>
      <FormulaScroll />
      <FormulaToggle aria-label="Expand formula"><Chev dir="down" w={18} h={11} /></FormulaToggle>
    </FormulaBox>
  </>
);

const StatusBar = () => (
  <Status>
    <StatusCell><StatusIcon width="20" height="20" fill="none" stroke="#1e395b" strokeWidth="1.300"><path d="M10 1v18M1 10h18M7.500 3.500L10 1l2.500 2.500M7.500 16.500L10 19l2.500-2.500M3.500 7.500L1 10l2.500 2.500M16.500 7.500L19 10l-2.500 2.500" /></StatusIcon></StatusCell>
    <StatusCell><StatusIcon width="22" height="20" fill="none" stroke="#1e395b"><path d="M7 1h14v12H7z" strokeDasharray="2 1" /><path d="M2.500 14V1M.5 3.500L2.500 1l2 2.500M7 17.500h13M18 15.500l2.500 2-2.500 2" /></StatusIcon>550 × 129px</StatusCell>
    <StatusCell><StatusIcon width="22" height="20" fill="none" stroke="#1e395b"><path d="M7 1h14v12H7z" fill="#eaf3fc" /><path d="M2.500 14V1M.5 3.500L2.500 1l2 2.500M7 17.500h13M18 15.500l2.500 2-2.500 2" /></StatusIcon>1920 × 1282px</StatusCell>
    <StatusCell />
    <StatusCell $grow />
    <Zoom>
      <span>100%</span>
      <RoundButton aria-label="Zoom out"><svg width="12" height="12"><path d="M0 6h12" stroke="#444" strokeWidth="2.500" /></svg></RoundButton>
      <Slider type="range" aria-label="Zoom" min={0} max={100} defaultValue={50} />
      <RoundButton aria-label="Zoom in"><svg width="12" height="12"><path d="M0 6h12M6 0v12" stroke="#444" strokeWidth="2" /></svg></RoundButton>
    </Zoom>
  </Status>
);

const WindowsBar = () => (
  <TaskBar>
    <TaskButton $w={72} aria-label="Start"><svg width="25" height="24" fill="#fff"><path d="M0 3.500l11-1.500v9.500H0zM12 1.800L25 0v11.500H12zM0 12.500h11V22L0 20.500zM12 12.500h13V24l-13-1.800z" /></svg></TaskButton>
    <TaskSearch><Magnifier s={25} c="#111" /><input aria-label="Search" placeholder="Type here to search" /></TaskSearch>
    <TaskButton $w={72} aria-label="Cortana"><svg width="26" height="26"><circle cx="13" cy="13" r="10.500" fill="none" stroke="#fff" strokeWidth="2.800" /></svg></TaskButton>
    <TaskButton $w={72} aria-label="Task view"><svg width="25" height="24" fill="none" stroke="#fff" strokeWidth="1.300"><path d="M1 0v4h16V0M1 8h16v9H1zM1 24v-4h16v4M23 0v6M23 12v12" /><path d="M21 7.500h4v4h-4z" fill="#fff" stroke="none" /></svg></TaskButton>
    <Gap />
    <TaskButton $w={65} $run aria-label="File Explorer"><FolderIcon /></TaskButton>
    <TaskButton $w={65} aria-label="Chrome"><ChromeIcon /></TaskButton>
    <TaskButton $w={65} $run aria-label="Outlook"><OutlookIcon /></TaskButton>
    <TaskButton $w={65} aria-label="News"><NewsIcon /></TaskButton>
    <TaskButton $w={65} aria-label="Qlik"><QlikIcon /></TaskButton>
    <TaskButton $w={65} $run $on aria-label="Paint"><PaletteIcon s={36} /></TaskButton>
    <TaskButton $w={65} $run aria-label="Power BI"><PowerBiIcon /></TaskButton>
    <TaskButton $w={65} $run aria-label="Chrome profile"><ChromeIcon person /></TaskButton>
    <TaskButton $w={65} $run aria-label="Notepad"><NotepadIcon /></TaskButton>
    <Tray>
      <TaskButton $w={48} aria-label="Hidden icons"><Chev dir="up" w={18} h={11} c="#fff" sw={1.5} /></TaskButton>
      <TaskButton $w={48} aria-label="Meet now"><svg width="18" height="24" fill="none" stroke="#fff" strokeWidth="1.300"><path d="M1 6h10v12H1zM11 12l5-4v8zM3 2.500c3-2 8-2 11 0M3 21.500c3 2 8 2 11 0" /></svg></TaskButton>
      <TaskButton $w={48} aria-label="OneDrive"><CloudIcon /></TaskButton>
      <TaskButton $w={48} aria-label="OneDrive work"><CloudIcon /></TaskButton>
      <TaskButton $w={48} aria-label="Volume"><svg width="24" height="20" fill="none" stroke="#fff" strokeWidth="1.300"><path d="M1 7h4l5-6v18l-5-6H1zM14 7c2 2 2 4 0 6M17 4.500c4 4 4 7 0 11M20 2c5 5 5 11 0 16" /></svg></TaskButton>
      <TaskButton $w={48} aria-label="Dropbox"><svg width="26" height="26"><path d="M6 2l6 4-6 4-6-4zM19 2l6 4-6 4-6-4zM19 10l6 4-6 4-6-4zM13 17l4 2-3 3z" fill="#fff" /><rect y="11" width="14" height="14" rx="3" fill="#d0021b" /><text x="7" y="22.500" fill="#fff" fontSize="12" fontWeight="700" textAnchor="middle" fontFamily="Open Sans, sans-serif">1</text></svg></TaskButton>
      <TaskButton $w={60} aria-label="Ink workspace"><svg width="22" height="24" fill="none" stroke="#fff" strokeWidth="1.400"><path d="M7 17L14 2c2-2 4-1 3 2L10 20l-4 2zM13 11c4-3 8-2 7 0s-5 1-5 4M8 11c-6 1-8 7-6 10s6 1 7-1" /></svg></TaskButton>
      <TaskButton $w={54}>ENG</TaskButton>
      <Clock><span>06:45</span><span>27/03/2021</span></Clock>
      <TaskButton $w={66} aria-label="Notifications"><svg width="38" height="42"><path d="M3 5h24v19H17l-4 6-4-6H3z" fill="#fff" /><path d="M8 10h14M8 14h14M8 18h10" stroke="#33424a" strokeWidth="1.500" /><circle cx="26" cy="29" r="11.500" fill="#3c4144" stroke="#999" /><text x="26" y="35" fill="#fff" fontSize="17" fontWeight="600" textAnchor="middle" fontFamily="Open Sans, sans-serif">5</text></svg></TaskButton>
      <PeekLine />
    </Tray>
  </TaskBar>
);

export default function App() {
  return (
    <Screen>
      <Global />
      <PaintTop />
      <CanvasRow>
        <Canvas>
          <ModelRibbon />
          <PbiBody>
            <SideNav>
              <NavButton $on aria-label="Report view"><svg width="22" height="22" viewBox="0 0 22 22" fill="none" stroke="#252423" strokeWidth="1.600"><path d="M1 0v21h21M4 8h3.500v10H4zM10 11h3v7h-3zM16 2h3.500v16H16z" /></svg></NavButton>
              <NavButton aria-label="Data view"><TableGlyph s={24} /></NavButton>
              <NavButton aria-label="Model view"><svg width="28" height="28" viewBox="0 0 28 28" fill="none" stroke="#605e5c" strokeWidth="1.500"><path d="M15 1h12v11H15zM15 5h12M1 10h9v11H1zM1 14h9M17 17h10v10H17zM17 21h10M5 10V5h10M10 19h7" /></svg></NavButton>
            </SideNav>
            <ReportView />
            <FilterPane>
              <svg width="18" height="20" fill="none" stroke="#494745" strokeWidth="1.300"><path d="M17 1v18l-8-6H1V8h8z" /></svg>
              <FilterTitle>Filters</FilterTitle>
            </FilterPane>
            <Visualizations />
            <Fields />
            <FormulaBar />
          </PbiBody>
          <Note>Below customer are new customer.</Note>
          <Mark $x={72} $y={234} $w={464} $h={399} $c={INDIGO} $r="0" />
          <Mark $x={848} $y={192} $w={284} $h={437} $c={RED} $r="20px" />
          <Mark $x={1580} $y={323} $w={311} $h={55} $c={RED} $r="32px / 22px" />
          <TextBox>
            <textarea aria-label="Text on canvas" spellCheck={false} defaultValue={noteText} />
            <Caret />
            {handles.map(([x, y]) => <Handle key={x + y} $x={x} $y={y} />)}
          </TextBox>
        </Canvas>
        <VScroll><Chev dir="up" w={12} h={8} c="#b8b8b8" sw={2} /><Chev dir="down" w={12} h={8} c="#b8b8b8" sw={2} /></VScroll>
      </CanvasRow>
      <HScroll><Chev dir="left" w={8} h={12} c="#b8b8b8" sw={2} /><Chev dir="right" w={8} h={12} c="#b8b8b8" sw={2} /></HScroll>
      <StatusBar />
      <WindowsBar />
    </Screen>
  );
}
